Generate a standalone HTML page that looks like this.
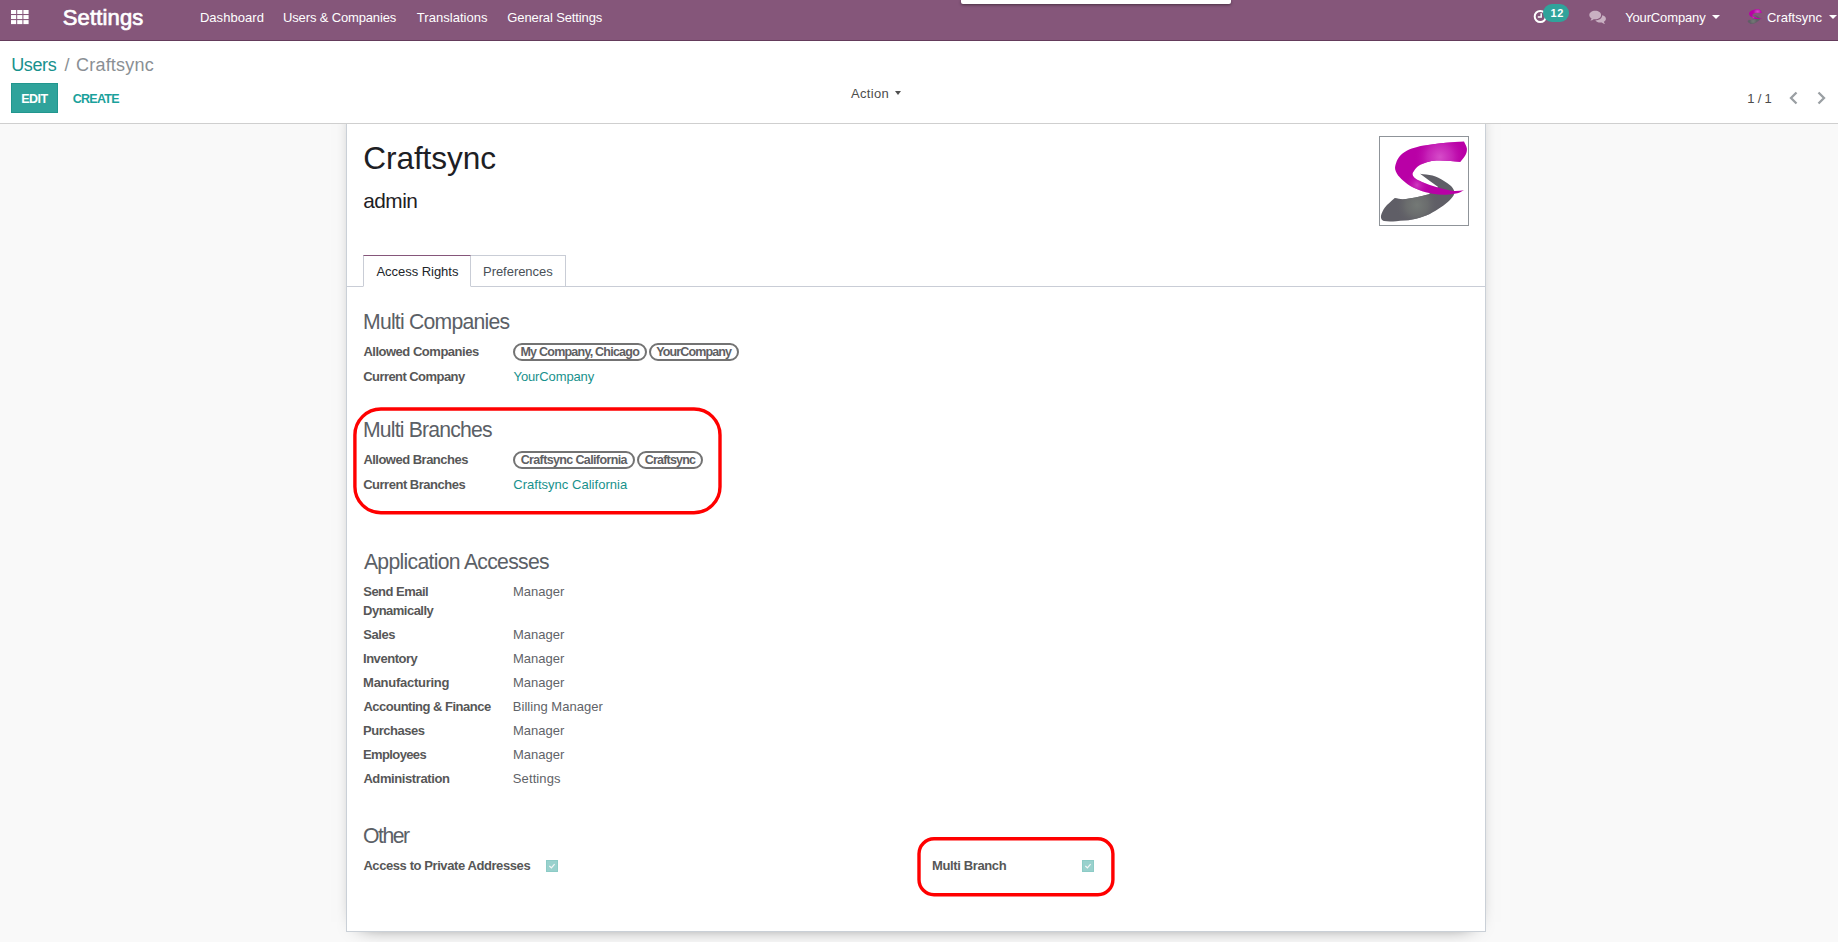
<!DOCTYPE html>
<html lang="en">
<head>
<meta charset="utf-8">
<title>Craftsync - Odoo</title>
<style>
html,body{margin:0;padding:0;}
body{width:1838px;height:942px;overflow:hidden;background:#f9f9f9;font-family:"Liberation Sans",sans-serif;position:relative;}
.abs{position:absolute;}
.t{position:absolute;white-space:nowrap;line-height:24px;height:24px;}
#nav{left:0;top:0;width:1838px;height:40px;background:#85567a;border-bottom:1px solid #643b5b;}
#cp{left:0;top:41px;width:1838px;height:82px;background:#fff;border-bottom:1px solid #cfcfcf;}
#sheet{left:346px;top:-30px;width:1138px;height:837px;background:#fff;border:1px solid #cad0d7;border-top:none;box-shadow:0 5px 20px -15px #000;}
#edit{left:11px;top:83px;width:45px;height:28px;background:#2fa39b;border:1px solid #21968e;}
.tab{height:31px;border:1px solid #c9cdd6;box-sizing:border-box;background:#fff;}
.tag{box-sizing:border-box;height:18px;border:2px solid #737373;border-radius:9px;}
.chk{box-sizing:border-box;width:12px;height:12px;background:#99d1cd;border:1px solid #8ccbc6;}
</style>
</head>
<body>
<div class="abs" id="nav"></div>
<div class="abs" style="left:961px;top:0;width:270px;height:4px;background:#fff;box-shadow:0 1px 3px rgba(0,0,0,.45);border-radius:0 0 2px 2px;"></div>
<!-- apps icon -->
<svg class="abs" style="left:10.900px;top:9.900px" width="18" height="15" viewBox="0 0 18 15"><g fill="#fff"><rect x="0.00" y="0.00" width="5.200" height="4"/><rect x="6.20" y="0.00" width="5.200" height="4"/><rect x="12.40" y="0.00" width="5.200" height="4"/><rect x="0.00" y="5.05" width="5.200" height="4"/><rect x="6.20" y="5.05" width="5.200" height="4"/><rect x="12.40" y="5.05" width="5.200" height="4"/><rect x="0.00" y="10.10" width="5.200" height="4"/><rect x="6.20" y="10.10" width="5.200" height="4"/><rect x="12.40" y="10.10" width="5.200" height="4"/></g></svg>
<!-- clock icon -->
<svg class="abs" style="left:1533px;top:9px" width="15" height="15" viewBox="0 0 15 15"><circle cx="7.300" cy="7.500" r="5.600" fill="none" stroke="#fff" stroke-width="2"/><path d="M8.200 4.200v3.800H4.800" fill="none" stroke="#fff" stroke-width="1.500"/></svg>
<div class="abs" style="left:1543.300px;top:4px;width:25.800px;height:18px;border-radius:9px;background:#30a39b;"></div>
<!-- chat icon -->
<svg class="abs" style="left:1588.600px;top:10.300px" width="17" height="14" viewBox="0 0 17 14"><g fill="#c9b0c2">
<path d="M6.2 0.8C2.9 0.8 0.3 2.7 0.3 5.1c0 1.4 0.9 2.6 2.3 3.4-0.2 0.8-0.7 1.5-1.3 2.1 1.3-0.1 2.5-0.6 3.4-1.4 0.5 0.1 1 0.1 1.5 0.1 3.300 0 5.900-1.900 5.900-4.300S9.500 0.800 6.200 0.800z"/>
<path d="M13.2 5.300c0 2.900-3.100 5.200-6.900 5.200 1 1.300 2.900 2.100 5 2.100 0.500 0 1-0.100 1.500-0.100 0.900 0.800 2 1.200 3.300 1.400-0.600-0.600-1-1.300-1.300-2.100 1.300-0.700 2.100-1.800 2.100-3.100 0-1.500-1.500-2.800-3.700-3.400z"/>
</g></svg>
<div class="abs" style="left:1712px;top:15px;width:0;height:0;border-left:4px solid transparent;border-right:4px solid transparent;border-top:4px solid #fff;"></div>
<div class="abs" style="left:1828.500px;top:15px;width:0;height:0;border-left:4px solid transparent;border-right:4px solid transparent;border-top:4px solid #fff;"></div>
<!-- avatar small -->
<div class="abs" style="left:1745.700px;top:8px;width:17px;height:17px;border-radius:50%;overflow:hidden;"><svg style="display:block" width="17" height="17" viewBox="0 0 90 90"><use href="#logo"/></svg></div>

<div class="abs" id="cp"></div>
<div class="abs" id="edit"></div>
<div class="abs" style="left:895px;top:91px;width:0;height:0;border-left:3.500px solid transparent;border-right:3.500px solid transparent;border-top:4px solid #505050;"></div>
<svg class="abs" style="left:1788px;top:91px" width="40" height="14" viewBox="0 0 40 14"><g fill="none" stroke="#9a9fa3" stroke-width="2.3">
<path d="M8.5 1.500L3 7l5.500 5.500"/><path d="M30.500 1.500L36 7l-5.500 5.500"/></g></svg>

<div class="abs" style="left:0;top:124px;width:1838px;height:818px;overflow:hidden;"><div class="abs" id="sheet"></div></div>
<!-- logo -->
<div class="abs" style="left:1379px;top:136px;width:88px;height:88px;border:1px solid #8f9499;background:#fff;"></div>
<svg class="abs" style="left:1379px;top:136px" width="90" height="90" viewBox="0 0 90 90">
<defs>
<radialGradient id="gm" gradientUnits="userSpaceOnUse" cx="61" cy="21" r="26"><stop offset="0" stop-color="#d64cc9"/><stop offset="0.5" stop-color="#c521b6"/><stop offset="1" stop-color="#b900a6" stop-opacity="0"/></radialGradient>
<radialGradient id="gm2" gradientUnits="userSpaceOnUse" cx="38" cy="49" r="13"><stop offset="0" stop-color="#cf3cc1"/><stop offset="1" stop-color="#b900a6" stop-opacity="0"/></radialGradient>
<radialGradient id="gg" gradientUnits="userSpaceOnUse" cx="38" cy="69" r="22"><stop offset="0" stop-color="#747976"/><stop offset="0.5" stop-color="#6a6c6d"/><stop offset="1" stop-color="#5f5e66" stop-opacity="0"/></radialGradient>
<g id="logo">
<path d="M41.1 37.7C45.2 38.3 49.5 38.4 53.5 39.6C57.5 40.8 61.3 42.9 65.0 44.9C67.4 46.2 69.7 47.8 71.7 49.7C73.1 51.0 74.4 52.7 75.0 54.5C75.4 55.9 75.4 57.9 74.7 59.2C73.3 61.7 71.0 63.9 68.8 65.9C65.8 68.6 62.6 71.0 59.2 73.1C55.6 75.4 51.8 77.7 47.8 79.3C43.2 81.2 38.3 82.7 33.4 83.6C28.1 84.6 22.6 84.9 17.2 85.2C13.1 85.4 8.9 85.6 5.0 85.0C4.0 84.8 2.9 83.9 2.4 83.0C1.9 82.0 1.8 80.5 2.1 79.3C2.9 76.7 4.0 73.9 5.7 71.7C8.5 68.1 12.4 65.3 15.8 62.1C18.5 62.5 21.2 63.3 23.9 63.2C28.0 63.1 32.2 62.4 36.3 61.6C40.8 60.7 45.2 59.4 49.7 58.3C52.9 55.9 56.0 53.5 59.2 51.1C53.2 46.6 47.1 42.2 41.1 37.7z" fill="#5f5e66"/>
<path d="M41.1 37.7C45.2 38.3 49.5 38.4 53.5 39.6C57.5 40.8 61.3 42.9 65.0 44.9C67.4 46.2 69.7 47.8 71.7 49.7C73.1 51.0 74.4 52.7 75.0 54.5C75.4 55.9 75.4 57.9 74.7 59.2C73.3 61.7 71.0 63.9 68.8 65.9C65.8 68.6 62.6 71.0 59.2 73.1C55.6 75.4 51.8 77.7 47.8 79.3C43.2 81.2 38.3 82.7 33.4 83.6C28.1 84.6 22.6 84.9 17.2 85.2C13.1 85.4 8.9 85.6 5.0 85.0C4.0 84.8 2.9 83.9 2.4 83.0C1.9 82.0 1.8 80.5 2.1 79.3C2.9 76.7 4.0 73.9 5.7 71.7C8.5 68.1 12.4 65.3 15.8 62.1C18.5 62.5 21.2 63.3 23.9 63.2C28.0 63.1 32.2 62.4 36.3 61.6C40.8 60.7 45.2 59.4 49.7 58.3C52.9 55.9 56.0 53.5 59.2 51.1C53.2 46.6 47.1 42.2 41.1 37.7z" fill="url(#gg)"/>
<path d="M16.2 33.4C15.7 31.3 16.5 28.9 17.2 26.8C17.9 24.6 19.0 22.2 20.5 20.5C22.5 18.2 25.0 16.2 27.7 14.8C30.9 13.1 34.6 11.9 38.2 11.0C42.9 9.8 47.7 9.3 52.5 8.6C57.3 7.9 62.1 7.2 66.9 6.7C72.9 6.1 79.0 5.8 85.0 5.4C86.0 7.7 87.6 10.0 87.9 12.4C88.1 14.6 87.5 17.1 86.5 19.1C85.2 21.7 83.0 23.8 81.2 26.1C78.0 25.7 74.9 25.2 71.7 25.0C66.9 24.7 62.1 24.3 57.3 24.6C54.1 24.8 50.9 25.4 47.8 26.3C45.1 27.1 42.4 28.1 40.1 29.6C38.2 30.8 36.6 32.6 35.3 34.4C34.5 35.5 33.5 37.0 33.6 38.2C33.7 39.5 34.7 41.1 35.8 42.0C37.8 43.7 40.5 44.8 43.0 45.9C47.7 47.9 52.4 49.7 57.3 51.1C62.9 52.7 68.7 54.3 74.5 54.9C78.0 55.3 81.5 54.4 85.0 54.2C82.8 55.2 80.7 56.7 78.3 57.3C74.6 58.2 70.7 58.7 66.9 58.8C62.4 58.9 57.9 58.6 53.5 57.8C49.0 57.0 44.4 55.7 40.1 54.0C36.1 52.5 32.2 50.5 28.7 48.2C25.7 46.2 22.8 43.8 20.5 41.1C18.6 38.9 16.8 36.1 16.2 33.4z" fill="#b900a6"/>
<path d="M16.2 33.4C15.7 31.3 16.5 28.9 17.2 26.8C17.9 24.6 19.0 22.2 20.5 20.5C22.5 18.2 25.0 16.2 27.7 14.8C30.9 13.1 34.6 11.9 38.2 11.0C42.9 9.8 47.7 9.3 52.5 8.6C57.3 7.9 62.1 7.2 66.9 6.7C72.9 6.1 79.0 5.8 85.0 5.4C86.0 7.7 87.6 10.0 87.9 12.4C88.1 14.6 87.5 17.1 86.5 19.1C85.2 21.7 83.0 23.8 81.2 26.1C78.0 25.7 74.9 25.2 71.7 25.0C66.9 24.7 62.1 24.3 57.3 24.6C54.1 24.8 50.9 25.4 47.8 26.3C45.1 27.1 42.4 28.1 40.1 29.6C38.2 30.8 36.6 32.6 35.3 34.4C34.5 35.5 33.5 37.0 33.6 38.2C33.7 39.5 34.7 41.1 35.8 42.0C37.8 43.7 40.5 44.8 43.0 45.9C47.7 47.9 52.4 49.7 57.3 51.1C62.9 52.7 68.7 54.3 74.5 54.9C78.0 55.3 81.5 54.4 85.0 54.2C82.8 55.2 80.7 56.7 78.3 57.3C74.6 58.2 70.7 58.7 66.9 58.8C62.4 58.9 57.9 58.6 53.5 57.8C49.0 57.0 44.4 55.7 40.1 54.0C36.1 52.5 32.2 50.5 28.7 48.2C25.7 46.2 22.8 43.8 20.5 41.1C18.6 38.9 16.8 36.1 16.2 33.4z" fill="url(#gm)"/>
<path d="M16.2 33.4C15.7 31.3 16.5 28.9 17.2 26.8C17.9 24.6 19.0 22.2 20.5 20.5C22.5 18.2 25.0 16.2 27.7 14.8C30.9 13.1 34.6 11.9 38.2 11.0C42.9 9.8 47.7 9.3 52.5 8.6C57.3 7.9 62.1 7.2 66.9 6.7C72.9 6.1 79.0 5.8 85.0 5.4C86.0 7.7 87.6 10.0 87.9 12.4C88.1 14.6 87.5 17.1 86.5 19.1C85.2 21.7 83.0 23.8 81.2 26.1C78.0 25.7 74.9 25.2 71.7 25.0C66.9 24.7 62.1 24.3 57.3 24.6C54.1 24.8 50.9 25.4 47.8 26.3C45.1 27.1 42.4 28.1 40.1 29.6C38.2 30.8 36.6 32.6 35.3 34.4C34.5 35.5 33.5 37.0 33.6 38.2C33.7 39.5 34.7 41.1 35.8 42.0C37.8 43.7 40.5 44.8 43.0 45.9C47.7 47.9 52.4 49.7 57.3 51.1C62.9 52.7 68.7 54.3 74.5 54.9C78.0 55.3 81.5 54.4 85.0 54.2C82.8 55.2 80.7 56.7 78.3 57.3C74.6 58.2 70.7 58.7 66.9 58.8C62.4 58.9 57.9 58.6 53.5 57.8C49.0 57.0 44.4 55.7 40.1 54.0C36.1 52.5 32.2 50.5 28.7 48.2C25.7 46.2 22.8 43.8 20.5 41.1C18.6 38.9 16.8 36.1 16.2 33.4z" fill="url(#gm2)"/>
</g>
</defs>
<use href="#logo"/>
</svg>

<!-- tabs -->
<div class="abs" style="left:347px;top:286px;width:1138px;height:1px;background:#c9cdd6;"></div>
<div class="abs tab" style="left:470px;top:255px;width:96px;height:32px;"></div>
<div class="abs tab" style="left:363px;top:255px;width:108px;height:32px;border-top:1px solid #85567a;border-bottom-color:#fff;"></div>

<!-- tags -->
<div class="abs tag" style="left:513px;top:343px;width:133.500px;"></div>
<div class="abs tag" style="left:649px;top:343px;width:90px;"></div>
<div class="abs tag" style="left:513px;top:451px;width:121.500px;"></div>
<div class="abs tag" style="left:637px;top:451px;width:66px;"></div>

<!-- red highlights -->
<svg class="abs" style="left:0;top:0" width="1838" height="942" viewBox="0 0 1838 942"><g fill="none" stroke="#ff0000" stroke-width="3.400">
<rect x="354.900" y="409" width="365.100" height="103.700" rx="26" ry="26"/>
<rect x="919" y="838.800" width="193.900" height="55.900" rx="15" ry="15"/>
</g></svg>

<!-- checkboxes -->
<div class="abs chk" style="left:546px;top:860px;"></div>
<svg class="abs" style="left:546px;top:860px" width="12" height="12" viewBox="0 0 12 12"><path d="M3.300 6.100l2.100 1.700 3.200-3.600" fill="none" stroke="#f3f5f6" stroke-width="1.250"/></svg>
<div class="abs chk" style="left:1082px;top:860px;"></div>
<svg class="abs" style="left:1082px;top:860px" width="12" height="12" viewBox="0 0 12 12"><path d="M3.300 6.100l2.100 1.700 3.200-3.600" fill="none" stroke="#f3f5f6" stroke-width="1.250"/></svg>

<span class="t" style="left:62.67px;top:6.00px;font-size:22px;font-weight:400;color:#ffffff;letter-spacing:0.166px;-webkit-text-stroke:0.7px #ffffff;">Settings</span>
<span class="t" style="left:199.90px;top:6.00px;font-size:13px;font-weight:400;color:#ffffff;letter-spacing:0.057px;">Dashboard</span>
<span class="t" style="left:283.03px;top:6.00px;font-size:13px;font-weight:400;color:#ffffff;letter-spacing:-0.146px;">Users &amp; Companies</span>
<span class="t" style="left:416.83px;top:6.00px;font-size:13px;font-weight:400;color:#ffffff;letter-spacing:0.032px;">Translations</span>
<span class="t" style="left:507.35px;top:6.00px;font-size:13px;font-weight:400;color:#ffffff;letter-spacing:-0.125px;">General Settings</span>
<span class="t" style="left:1550.44px;top:1.00px;font-size:11px;font-weight:700;color:#ffffff;letter-spacing:0.611px;">12</span>
<span class="t" style="left:1625.13px;top:6.00px;font-size:13px;font-weight:400;color:#ffffff;letter-spacing:-0.134px;">YourCompany</span>
<span class="t" style="left:1766.89px;top:6.00px;font-size:13px;font-weight:400;color:#ffffff;letter-spacing:0.020px;">Craftsync</span>
<span class="t" style="left:11.27px;top:53.01px;font-size:18px;font-weight:400;color:#17918c;letter-spacing:-0.405px;">Users</span>
<span class="t" style="left:64.42px;top:53.01px;font-size:18px;font-weight:400;color:#8a8f94;">/</span>
<span class="t" style="left:76.02px;top:53.01px;font-size:18px;font-weight:400;color:#8a8f94;letter-spacing:0.204px;">Craftsync</span>
<span class="t" style="left:21.37px;top:87.01px;font-size:12.5px;font-weight:700;color:#ffffff;letter-spacing:-0.605px;">EDIT</span>
<span class="t" style="left:72.78px;top:87.01px;font-size:12.5px;font-weight:700;color:#1aa19b;letter-spacing:-0.747px;">CREATE</span>
<span class="t" style="left:850.90px;top:82.00px;font-size:13px;font-weight:400;color:#4c4c4c;letter-spacing:0.355px;">Action</span>
<span class="t" style="left:1747.19px;top:87.00px;font-size:13px;font-weight:400;color:#4c4c4c;letter-spacing:-0.157px;">1 / 1</span>
<span class="t" style="left:363.22px;top:146.00px;font-size:31.6px;font-weight:400;color:#1d2024;letter-spacing:-0.072px;">Craftsync</span>
<span class="t" style="left:363.32px;top:189.01px;font-size:20.8px;font-weight:400;color:#1d2024;letter-spacing:-0.543px;">admin</span>
<span class="t" style="left:376.38px;top:260.00px;font-size:13px;font-weight:400;color:#212529;letter-spacing:-0.029px;">Access Rights</span>
<span class="t" style="left:483.03px;top:260.00px;font-size:13px;font-weight:400;color:#495057;letter-spacing:-0.041px;">Preferences</span>
<span class="t" style="left:363.02px;top:310.01px;font-size:21.2px;font-weight:400;color:#5b6066;letter-spacing:-0.762px;">Multi Companies</span>
<span class="t" style="left:363.39px;top:340.00px;font-size:13px;font-weight:700;color:#575757;letter-spacing:-0.483px;">Allowed Companies</span>
<span class="t" style="left:520.46px;top:340.01px;font-size:12.5px;font-weight:700;color:#606063;letter-spacing:-0.764px;">My Company, Chicago</span>
<span class="t" style="left:656.29px;top:340.01px;font-size:12.5px;font-weight:700;color:#606063;letter-spacing:-0.885px;">YourCompany</span>
<span class="t" style="left:363.21px;top:365.00px;font-size:13px;font-weight:700;color:#575757;letter-spacing:-0.559px;">Current Company</span>
<span class="t" style="left:513.58px;top:365.00px;font-size:13px;font-weight:400;color:#17918c;letter-spacing:-0.131px;">YourCompany</span>
<span class="t" style="left:363.02px;top:418.01px;font-size:21.2px;font-weight:400;color:#5b6066;letter-spacing:-0.809px;">Multi Branches</span>
<span class="t" style="left:363.39px;top:448.00px;font-size:13px;font-weight:700;color:#575757;letter-spacing:-0.514px;">Allowed Branches</span>
<span class="t" style="left:520.66px;top:448.01px;font-size:12.5px;font-weight:700;color:#606063;letter-spacing:-0.632px;">Craftsync California</span>
<span class="t" style="left:644.66px;top:448.01px;font-size:12.5px;font-weight:700;color:#606063;letter-spacing:-0.786px;">Craftsync</span>
<span class="t" style="left:363.21px;top:473.00px;font-size:13px;font-weight:700;color:#575757;letter-spacing:-0.491px;">Current Branches</span>
<span class="t" style="left:513.25px;top:473.00px;font-size:13px;font-weight:400;color:#17918c;letter-spacing:0.025px;">Craftsync California</span>
<span class="t" style="left:363.93px;top:550.01px;font-size:21.2px;font-weight:400;color:#5b6066;letter-spacing:-0.699px;">Application Accesses</span>
<span class="t" style="left:363.26px;top:580.00px;font-size:13px;font-weight:700;color:#575757;letter-spacing:-0.520px;">Send Email</span>
<span class="t" style="left:512.89px;top:580.00px;font-size:13px;font-weight:400;color:#5f6368;letter-spacing:0.007px;">Manager</span>
<span class="t" style="left:363.07px;top:599.00px;font-size:13px;font-weight:700;color:#575757;letter-spacing:-0.516px;">Dynamically</span>
<span class="t" style="left:363.26px;top:623.00px;font-size:13px;font-weight:700;color:#575757;letter-spacing:-0.411px;">Sales</span>
<span class="t" style="left:512.89px;top:623.00px;font-size:13px;font-weight:400;color:#5f6368;letter-spacing:0.007px;">Manager</span>
<span class="t" style="left:362.99px;top:647.00px;font-size:13px;font-weight:700;color:#575757;letter-spacing:-0.460px;">Inventory</span>
<span class="t" style="left:512.89px;top:647.00px;font-size:13px;font-weight:400;color:#5f6368;letter-spacing:0.007px;">Manager</span>
<span class="t" style="left:363.07px;top:671.00px;font-size:13px;font-weight:700;color:#575757;letter-spacing:-0.265px;">Manufacturing</span>
<span class="t" style="left:512.89px;top:671.00px;font-size:13px;font-weight:400;color:#5f6368;letter-spacing:0.007px;">Manager</span>
<span class="t" style="left:363.39px;top:695.00px;font-size:13px;font-weight:700;color:#575757;letter-spacing:-0.494px;">Accounting &amp; Finance</span>
<span class="t" style="left:512.82px;top:695.00px;font-size:13px;font-weight:400;color:#5f6368;letter-spacing:0.031px;">Billing Manager</span>
<span class="t" style="left:363.07px;top:719.00px;font-size:13px;font-weight:700;color:#575757;letter-spacing:-0.494px;">Purchases</span>
<span class="t" style="left:512.89px;top:719.00px;font-size:13px;font-weight:400;color:#5f6368;letter-spacing:0.007px;">Manager</span>
<span class="t" style="left:363.07px;top:743.00px;font-size:13px;font-weight:700;color:#575757;letter-spacing:-0.630px;">Employees</span>
<span class="t" style="left:512.89px;top:743.00px;font-size:13px;font-weight:400;color:#5f6368;letter-spacing:0.007px;">Manager</span>
<span class="t" style="left:363.39px;top:767.00px;font-size:13px;font-weight:700;color:#575757;letter-spacing:-0.400px;">Administration</span>
<span class="t" style="left:512.87px;top:767.00px;font-size:13px;font-weight:400;color:#5f6368;letter-spacing:0.088px;">Settings</span>
<span class="t" style="left:362.97px;top:824.01px;font-size:21.2px;font-weight:400;color:#5b6066;letter-spacing:-1.457px;">Other</span>
<span class="t" style="left:363.39px;top:854.00px;font-size:13px;font-weight:700;color:#575757;letter-spacing:-0.414px;">Access to Private Addresses</span>
<span class="t" style="left:932.07px;top:854.00px;font-size:13px;font-weight:700;color:#575757;letter-spacing:-0.378px;">Multi Branch</span>
</body>
</html>
